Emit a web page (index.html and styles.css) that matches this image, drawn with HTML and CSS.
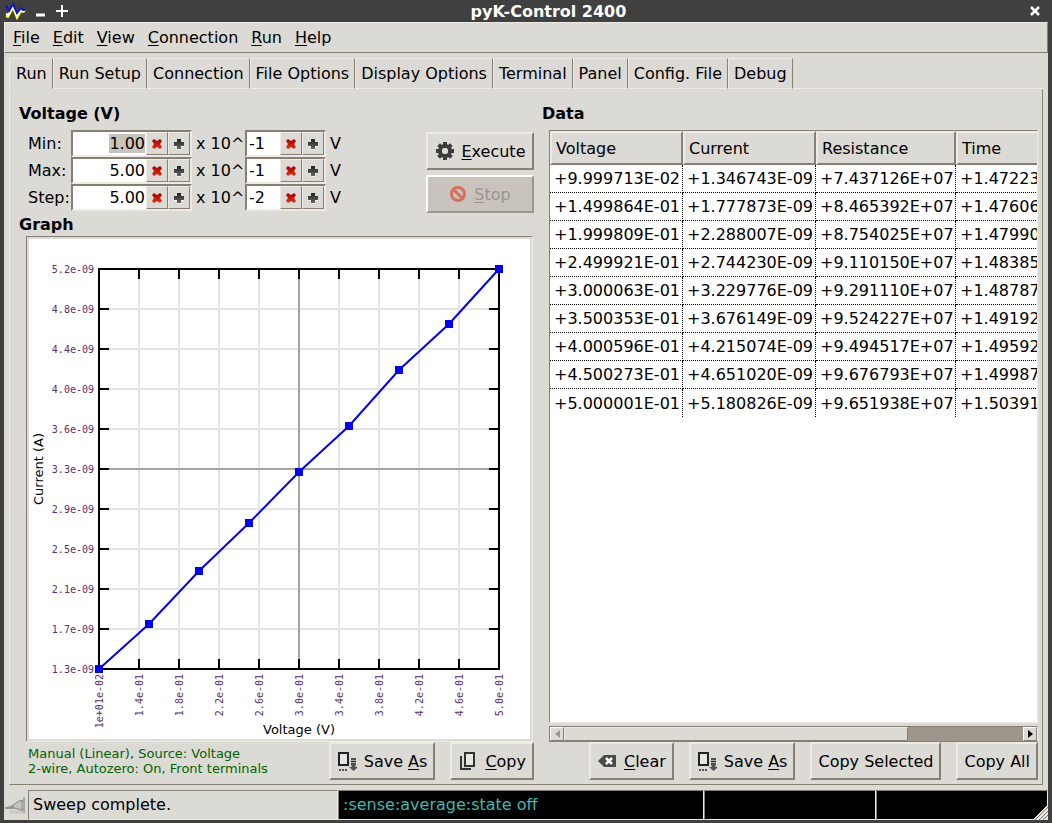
FILE: index.html
```html
<!DOCTYPE html>
<html lang="en">
<head>
<meta charset="utf-8">
<title>pyK-Control 2400</title>
<link rel="stylesheet" href="styles.css">
</head>
<body>
<svg class="defs" aria-hidden="true">
  <defs>
    <linearGradient id="dark" x1="0" y1="0" x2="0" y2="1"><stop offset="0" stop-color="#222"/><stop offset="1" stop-color="#666"/></linearGradient>
    <linearGradient id="red" x1="0" y1="0" x2="0" y2="1"><stop offset="0" stop-color="#a40000"/><stop offset="1" stop-color="#e83010"/></linearGradient>
    <symbol id="i-minus" viewBox="0 0 12 12"><path d="M1 3l2-2 3 2 3-2 2 2-2 3 2 3-2 2-3-2-3 2-2-2 2-3z" fill="url(#red)"/></symbol>
    <symbol id="i-plus" viewBox="0 0 12 12"><path d="M4 2h4v3h3v4H8v3H4V9H1V5h3z" fill="#f4f3f0"/><path d="M4 1h4v3h3v4H8v3H4V8H1V4h3z" fill="url(#dark)"/></symbol>
    <symbol id="i-save" viewBox="0 0 20 20"><path d="M2 2h9v12H2z" fill="#e8e6e2" stroke="#222" stroke-width="2"/><path d="M2 18h2v2H2zM5 18h2v2H5zM8 18h2v2H8z" fill="#555"/><path d="M14 8h5M14 10.500h5M14 13h5" stroke="#222" stroke-width="1.500"/><path d="M14.500 14h4v2h2.500l-4.500 4-4.500-4h2.500z" fill="#555"/></symbol>
    <symbol id="i-copy" viewBox="0 0 16 18"><path d="M1 4v13h10" fill="none" stroke="#333" stroke-width="2"/><path d="M5 1h9v13H5z" fill="#e8e6e2" stroke="#333" stroke-width="2"/></symbol>
  </defs>
</svg>
<div class="window">
  <header class="titlebar">
    <svg class="logo" width="22" height="18" viewBox="0 0 22 18"><g fill="none" stroke-width="2"><path d="M2 14l2 1 5-9 4 10 4-7 2 1 2-1" stroke="#ff2"/><path d="M2 12l2 1 5-9 4 9 4-6 2 2 2-1" stroke="#fff"/><path d="M2 4l3 5 4-7 4 9 4-5 2 2h2" stroke="#11c"/></g></svg>
    <button class="wm" aria-label="Minimize"><svg width="12" height="14"><path d="M2 11h9" stroke="#fff" stroke-width="3"/></svg></button>
    <button class="wm" aria-label="Maximize"><svg width="12" height="14"><path d="M0 7h12M6 1v12" stroke="#fff" stroke-width="2"/></svg></button>
    <h1>pyK-Control 2400</h1>
    <button class="wm" aria-label="Close"><svg width="10" height="10"><path d="M1 1l8 8M9 1l-8 8" stroke="#fff" stroke-width="2.500"/></svg></button>
  </header>
  <nav class="menubar">
    <button><u>F</u>ile</button><button><u>E</u>dit</button><button><u>V</u>iew</button><button><u>C</u>onnection</button><button><u>R</u>un</button><button><u>H</u>elp</button>
  </nav>
  <main class="notebook">
    <div class="tabs" role="tablist">
      <button role="tab" aria-selected="true">Run</button><button role="tab">Run Setup</button><button role="tab">Connection</button><button role="tab">File Options</button><button role="tab">Display Options</button><button role="tab">Terminal</button><button role="tab">Panel</button><button role="tab">Config. File</button><button role="tab">Debug</button>
      <span class="tab-rest"></span>
    </div>
    <div class="page">
      <section class="left">
        <h2>Voltage (V)</h2>
        <div class="setup">
          <div class="fields">
            <label for="min">Min:</label>
            <span class="spin"><input id="min" value="1.00"><button aria-label="Decrease"><svg><use href="#i-minus"/></svg></button><button aria-label="Increase"><svg><use href="#i-plus"/></svg></button></span>
            <label for="min-exp">x 10^</label>
            <span class="spin exp"><input id="min-exp" value="-1"><button aria-label="Decrease"><svg><use href="#i-minus"/></svg></button><button aria-label="Increase"><svg><use href="#i-plus"/></svg></button></span>
            <span>V</span>
            <label for="max">Max:</label>
            <span class="spin"><input id="max" value="5.00"><button aria-label="Decrease"><svg><use href="#i-minus"/></svg></button><button aria-label="Increase"><svg><use href="#i-plus"/></svg></button></span>
            <label for="max-exp">x 10^</label>
            <span class="spin exp"><input id="max-exp" value="-1"><button aria-label="Decrease"><svg><use href="#i-minus"/></svg></button><button aria-label="Increase"><svg><use href="#i-plus"/></svg></button></span>
            <span>V</span>
            <label for="step">Step:</label>
            <span class="spin"><input id="step" value="5.00"><button aria-label="Decrease"><svg><use href="#i-minus"/></svg></button><button aria-label="Increase"><svg><use href="#i-plus"/></svg></button></span>
            <label for="step-exp">x 10^</label>
            <span class="spin exp"><input id="step-exp" value="-2"><button aria-label="Decrease"><svg><use href="#i-minus"/></svg></button><button aria-label="Increase"><svg><use href="#i-plus"/></svg></button></span>
            <span>V</span>
          </div>
          <div class="actions">
            <button class="btn"><svg width="20" height="20" viewBox="-10 -10 20 20"><g fill="#3c3c3c"><path id="tooth" d="M-2 -9h4v5h-4zM-2 9h4v-5h-4z"/><use href="#tooth" transform="rotate(45)"/><use href="#tooth" transform="rotate(90)"/><use href="#tooth" transform="rotate(135)"/></g><circle r="5" fill="none" stroke="#3c3c3c" stroke-width="4"/><circle r="3" fill="#dcdad5"/></svg><span><u>E</u>xecute</span></button>
            <button class="btn" disabled><svg width="18" height="18" viewBox="0 0 18 18"><circle cx="9" cy="9" r="6.500" fill="none" stroke="#d5705c" stroke-width="3"/><path d="M4.500 4.500l9 9" stroke="#d5705c" stroke-width="3"/></svg><span><u>S</u>top</span></button>
          </div>
        </div>
        <h2>Graph</h2>
        <div class="graph">
          <svg width="501" height="500" viewBox="29 239 501 500" role="img" aria-label="Current against voltage">
            <path class="grid" d="M139 269v400M179 269v400M219 269v400M259 269v400M339 269v400M379 269v400M419 269v400M459 269v400M99 309h400M99 349h400M99 389h400M99 429h400M99 509h400M99 549h400M99 589h400M99 629h400"/>
            <path class="axis" d="M299 269v400M99 469h400"/>
            <path class="frame" d="M99 269h400v400H99zM139 269v10m0 380v10M179 269v10m0 380v10M219 269v10m0 380v10M259 269v10m0 380v10M299 269v10m0 380v10M339 269v10m0 380v10M379 269v10m0 380v10M419 269v10m0 380v10M459 269v10m0 380v10M99 309h10m380 0h10M99 349h10m380 0h10M99 389h10m380 0h10M99 429h10m380 0h10M99 469h10m380 0h10M99 509h10m380 0h10M99 549h10m380 0h10M99 589h10m380 0h10M99 629h10m380 0h10"/>
            <path class="line" d="M99 669L149 624L199 571L249 523L299 472L349 426L399 370L449 324L499 269"/>
            <path class="dots" d="M95 665h8v8h-8zM145 620h8v8h-8zM195 567h8v8h-8zM245 519h8v8h-8zM295 468h8v8h-8zM345 422h8v8h-8zM395 366h8v8h-8zM445 320h8v8h-8zM495 265h8v8h-8z"/>
            <g class="tick">
              <text x="94" y="273">5.2e-09</text><text x="94" y="313">4.8e-09</text><text x="94" y="353">4.4e-09</text><text x="94" y="393">4.0e-09</text><text x="94" y="433">3.6e-09</text><text x="94" y="473">3.3e-09</text><text x="94" y="513">2.9e-09</text><text x="94" y="553">2.5e-09</text><text x="94" y="593">2.1e-09</text><text x="94" y="633">1.7e-09</text><text x="94" y="673">1.3e-09</text>
              <text transform="translate(103 674) rotate(-90)">1e+01e-02</text><text transform="translate(143 674) rotate(-90)">1.4e-01</text><text transform="translate(183 674) rotate(-90)">1.8e-01</text><text transform="translate(223 674) rotate(-90)">2.2e-01</text><text transform="translate(263 674) rotate(-90)">2.6e-01</text><text transform="translate(303 674) rotate(-90)">3.0e-01</text><text transform="translate(343 674) rotate(-90)">3.4e-01</text><text transform="translate(383 674) rotate(-90)">3.8e-01</text><text transform="translate(423 674) rotate(-90)">4.2e-01</text><text transform="translate(463 674) rotate(-90)">4.6e-01</text><text transform="translate(503 674) rotate(-90)">5.0e-01</text>
            </g>
            <text class="name" x="299" y="734">Voltage (V)</text>
            <text class="name" transform="translate(43 469) rotate(-90)">Current (A)</text>
          </svg>
        </div>
        <div class="row">
          <p class="mode">Manual (Linear), Source: Voltage<br>2-wire, Autozero: On, Front terminals</p>
          <button class="btn"><svg width="20" height="20"><use href="#i-save"/></svg><span>Save <u>A</u>s</span></button>
          <button class="btn"><svg width="20" height="18"><use href="#i-copy"/></svg><span><u>C</u>opy</span></button>
        </div>
      </section>
      <section class="right">
        <h2>Data</h2>
        <div class="list">
          <table>
            <colgroup><col class="c1"><col class="c1"><col class="c2"><col class="c2"></colgroup>
            <thead><tr><th>Voltage</th><th>Current</th><th>Resistance</th><th>Time</th></tr></thead>
            <tbody>
              <tr><td>+9.999713E-02</td><td>+1.346743E-09</td><td>+7.437126E+07</td><td>+1.47223</td></tr>
              <tr><td>+1.499864E-01</td><td>+1.777873E-09</td><td>+8.465392E+07</td><td>+1.47606</td></tr>
              <tr><td>+1.999809E-01</td><td>+2.288007E-09</td><td>+8.754025E+07</td><td>+1.47990</td></tr>
              <tr><td>+2.499921E-01</td><td>+2.744230E-09</td><td>+9.110150E+07</td><td>+1.48385</td></tr>
              <tr><td>+3.000063E-01</td><td>+3.229776E-09</td><td>+9.291110E+07</td><td>+1.48787</td></tr>
              <tr><td>+3.500353E-01</td><td>+3.676149E-09</td><td>+9.524227E+07</td><td>+1.49192</td></tr>
              <tr><td>+4.000596E-01</td><td>+4.215074E-09</td><td>+9.494517E+07</td><td>+1.49592</td></tr>
              <tr><td>+4.500273E-01</td><td>+4.651020E-09</td><td>+9.676793E+07</td><td>+1.49987</td></tr>
              <tr><td>+5.000001E-01</td><td>+5.180826E-09</td><td>+9.651938E+07</td><td>+1.50391</td></tr>
            </tbody>
          </table>
        </div>
        <div class="scroll">
          <button aria-label="Scroll left" disabled><svg width="5" height="8"><path d="M5 0v8L0 4z" fill="#9c968c"/></svg></button>
          <div class="trough"><div class="thumb"></div></div>
          <button aria-label="Scroll right"><svg width="5" height="8"><path d="M0 0v8l5-4z"/></svg></button>
        </div>
        <div class="row">
          <button class="btn"><svg width="20" height="14" viewBox="0 0 20 14"><path d="M1 7l6-6h12v12H7z" fill="#4a4a4a"/><path d="M9 4l6 6M15 4l-6 6" stroke="#fff" stroke-width="2.500"/></svg><span><u>C</u>lear</span></button>
          <button class="btn"><svg width="20" height="20"><use href="#i-save"/></svg><span>Save <u>A</u>s</span></button>
          <button class="btn">Copy Selected</button>
          <button class="btn">Copy All</button>
        </div>
      </section>
    </div>
  </main>
  <footer class="status">
    <svg class="plug" width="24" height="20" viewBox="0 0 24 20"><ellipse cx="13" cy="17" rx="8" ry="2" fill="#cccac5"/><path d="M1 13c4 0 6-1 8-2M1 13h8M14 8l6-2M14 13l6 1" fill="none" stroke="#969692" stroke-width="2"/><path d="M9 10l6-4 3-1v11l-3-2-6-1z" fill="#c4c3bf" stroke="#8a8a86"/><path d="M20 2v16" stroke="#a8a8a4" stroke-width="2"/></svg>
    <span class="cell">Sweep complete.</span>
    <span class="cell term">:sense:average:state off</span>
    <span class="cell term"></span>
    <span class="cell term"></span>
    <svg class="grip" width="15" height="15"><path d="M15 0v15H0z" fill="#dcdad5"/><path d="M0 15L15 0M4 15L15 4M8 15l7-7M12 15l3-3" stroke="#fff"/><path d="M2 15L15 2M6 15l9-9M10 15l5-5" stroke="#868073"/></svg>
  </footer>
</div>
<script src="main.js"></script>
</body>
</html>
```
FILE: styles.css
```css
:root {
  --bg: #dcdad5;
  --light: #eeebe7;
  --dark: #868073;
}
* { box-sizing: border-box; }
body {
  margin: 0;
  background: #404040;
  color: #000;
  font: 16px/19px "DejaVu Sans", sans-serif;
}
button, input { font: inherit; color: inherit; margin: 0; padding: 0; border: 0; background: none; border-radius: 0; }
u { text-underline-offset: 2px; text-decoration-thickness: 1px; text-decoration-skip-ink: none; }
h1, h2, p { margin: 0; font-size: 16px; line-height: 19px; }
.defs { position: absolute; width: 0; height: 0; }

.window { display: flex; flex-direction: column; min-height: 100vh; padding: 0 4px 4px; }
.titlebar { display: flex; align-items: center; gap: 10px; height: 22px; color: #fff; }
.titlebar h1 { flex: 1; text-align: center; }
.logo { margin-right: -2px; }
.wm { display: flex; align-items: center; justify-content: center; width: 12px; height: 20px; }
.wm:last-child { margin-right: 7px; }

.menubar { display: flex; gap: 13px; height: 31px; padding: 0 8px; background: var(--bg); border: 1px solid; border-color: var(--light) var(--dark) var(--dark) var(--light); }

.notebook { flex: 1; display: flex; flex-direction: column; padding: 5px; background: var(--bg); }
.tabs { display: flex; height: 31px; }
.tabs button { padding: 0 5px; border: 1px solid; border-color: var(--light) var(--dark) var(--light) var(--light); white-space: nowrap; }
.tabs button:first-child { padding-left: 6px; border-bottom-color: transparent; }
.tab-rest { flex: 1; border-bottom: 1px solid var(--light); }
.page { flex: 1; display: flex; gap: 8px; padding: 14px 4px 4px 9px; border: 1px solid; border-color: transparent var(--dark) var(--dark) var(--light); }
.left, .right { display: flex; flex-direction: column; }
.left { flex: none; }
.right { flex: 1; min-width: 0; }

.setup { display: flex; justify-content: space-between; margin: 7px 0 4px; }
.fields { display: grid; grid-template-columns: 43px 121px 53px 81px auto; margin-left: 9px; align-items: center; }
.fields label { white-space: nowrap; }
.fields label[for$="exp"], .fields > span:not(.spin) { padding-left: 4px; }
.spin { display: flex; height: 27px; border: 2px solid; border-color: var(--dark) var(--light) var(--light) var(--dark); background: #fff; }
.spin input { flex: 1; min-width: 0; padding-right: 1px; text-align: right; outline: 0; }
.spin.exp input { padding-left: 2px; text-align: left; }
.spin input::selection { background: #c8c4bc; color: #000; }
.spin button { display: flex; align-items: center; justify-content: center; width: 22px; background: var(--bg); border: 1px solid; border-color: var(--light) var(--dark) var(--dark) var(--light); }
.spin svg { width: 12px; height: 12px; }

.btn { display: flex; align-items: center; justify-content: center; gap: 7px; height: 38px; padding: 0 6px; background: var(--bg); border: 2px solid; border-color: var(--light) var(--dark) var(--dark) var(--light); white-space: nowrap; }
.btn:disabled { color: #9c968c; background: #c8c4bc; border-color: #fff #9c968c #9c968c #fff; }
.actions { display: flex; flex-direction: column; gap: 5px; width: 108px; padding-top: 2px; margin-bottom: -2px; }

.graph { margin: 2px 1px 0 7px; padding: 2px; border: 1px solid; border-color: var(--dark) var(--light) var(--light) var(--dark); }
.graph > svg { display: block; background: #fff; }
.grid, .axis, .frame, .line { fill: none; stroke-width: 2; }
.grid { stroke: #e4e4e4; }
.axis { stroke: #a4a4a4; }
.frame { stroke: #000; }
.line { stroke: #00f; }
.dots { fill: #00f; }
.tick { font: 10px "DejaVu Sans Mono", monospace; fill: #5a2d6e; text-anchor: end; }
.name { font-size: 13px; text-anchor: middle; }

.row { display: flex; justify-content: flex-end; gap: 15px; }
.mode { flex: 1; align-self: center; padding-left: 9px; color: #006400; font-size: 13px; line-height: 15px; white-space: nowrap; }

.list { flex: 1; margin: 7px 0 3px 7px; overflow: hidden; background: #fff; border: 1px solid; border-color: var(--dark) var(--light) var(--light) var(--dark); }
table { table-layout: fixed; width: 545px; border-collapse: separate; border-spacing: 0; }
.c1 { width: 133px; }
.c2 { width: 140px; }
th { height: 34px; padding: 0 4px; text-align: left; font-weight: 400; background: var(--bg); border: 2px solid; border-color: var(--light) var(--dark) var(--dark) var(--light); }
td { height: 28px; padding: 0 0 0 4px; border: 0 dotted #000; border-width: 0 1px 1px 0; overflow: hidden; white-space: nowrap; }
tr:last-child td { border-bottom: 0; }

.scroll { display: flex; height: 16px; margin-left: 7px; background: #9c968c; border: 1px solid; border-color: var(--dark) var(--light) var(--dark) var(--dark); }
.scroll button { display: flex; align-items: center; justify-content: center; width: 14px; background: var(--bg); border: 1px solid; border-color: #fff var(--dark) var(--dark) #fff; }
.trough { flex: 1; }
.thumb { width: 75%; height: 100%; background: var(--bg); border: 1px solid; border-color: var(--light) var(--dark) var(--dark) var(--light); }

.status { position: relative; display: grid; grid-template-columns: 24px 310px 366px 1fr 1fr; height: 30px; background: var(--bg); }
.plug { align-self: center; }
.cell { padding: 4px; border: 1px solid; border-color: var(--dark) var(--light) var(--light) var(--dark); white-space: nowrap; overflow: hidden; }
.term { background: #000; color: #3fb8b0; }
.grip { position: absolute; right: 0; bottom: 0; }
```
FILE: main.js
```js
const first = document.getElementById("min");
first.focus();
first.select();
```
